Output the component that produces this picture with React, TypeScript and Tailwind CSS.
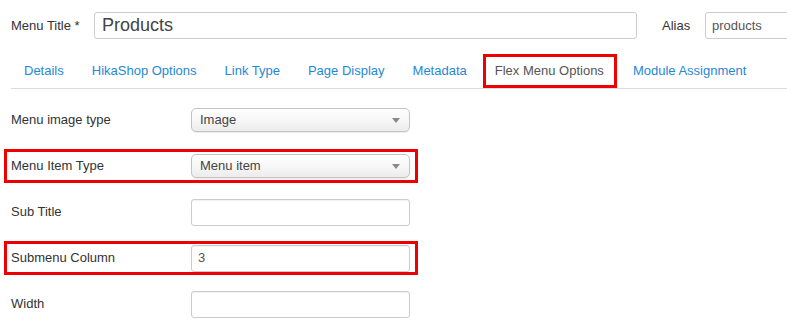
const tabs = [
  'Details',
  'HikaShop Options',
  'Link Type',
  'Page Display',
  'Metadata',
  'Flex Menu Options',
  'Module Assignment',
]

const rows = [
  { label: 'Menu image type', kind: 'select', value: 'Image', marked: false },
  { label: 'Menu Item Type', kind: 'select', value: 'Menu item', marked: true },
  { label: 'Sub Title', kind: 'input', value: '', marked: false },
  { label: 'Submenu Column', kind: 'input', value: '3', marked: true },
  { label: 'Width', kind: 'input', value: '', marked: false },
]

function Select({ value }: { value: string }) {
  return (
    <div className="flex h-[24px] w-[219px] items-center justify-between rounded-[5px] border border-[#c4c4c4] bg-linear-to-b from-white via-[#f7f7f7] to-[#ececec] pl-[8px] pr-[9px] text-[13px] text-[#444] shadow-[0_1px_1px_rgba(0,0,0,0.08)]">
      <span>{value}</span>
      <svg width="8" height="5" viewBox="0 0 8 5">
        <path d="M0 0h8L4 5z" fill="#8a8a8a" />
      </svg>
    </div>
  )
}

function Input({ value }: { value: string }) {
  return (
    <div className="flex h-[27px] w-[219px] items-center rounded-[3px] border border-[#ccc] bg-white px-[6px] text-[13px] text-[#555] shadow-[inset_0_1px_1px_rgba(0,0,0,0.06)]">
      {value}
    </div>
  )
}

export default function App() {
  return (
    <div className="h-[334px] w-[787px] overflow-hidden bg-white font-['Liberation_Sans',Arial,sans-serif] text-[13px] text-[#333]">
      {/* title row */}
      <div className="flex items-center whitespace-nowrap pt-[12px]">
        <div className="w-[94px] shrink-0 pl-[11px]">Menu Title *</div>
        <div className="flex h-[27px] w-[543px] shrink-0 items-center rounded-[3px] border border-[#ccc] px-[7px] text-[18px] text-[#444]">
          Products
        </div>
        <div className="ml-[25px] w-[43px] shrink-0">Alias</div>
        <div className="flex h-[27px] w-[220px] shrink-0 items-center rounded-[3px] border border-[#ccc] px-[6px] text-[#555]">
          products
        </div>
      </div>

      {/* tabs */}
      <div className="ml-[11px] mt-[15px] flex gap-[4px] whitespace-nowrap border-b border-[#ddd] pl-[1px]">
        {tabs.map((tab) =>
          tab === 'Flex Menu Options' ? (
            <div
              key={tab}
              className="flex h-[34px] items-center border-[3px] border-[#ee0000] pl-[9px] pr-[10px] text-[#555]"
            >
              {tab}
            </div>
          ) : (
            <div key={tab} className="flex h-[34px] items-center px-[12px] text-[#1f88d5]">
              {tab}
            </div>
          )
        )}
      </div>

      {/* fields */}
      <div className="mt-[14px] flex flex-col gap-[12px] pl-[4px]">
        {rows.map((row) => (
          <div
            key={row.label}
            className={`flex h-[34px] w-[414px] items-center border-[3px] pl-[4px] ${
              row.marked ? 'border-[#ee0000]' : 'border-transparent'
            }`}
          >
            <div className="w-[180px]">{row.label}</div>
            {row.kind === 'select' ? <Select value={row.value} /> : <Input value={row.value} />}
          </div>
        ))}
      </div>
    </div>
  )
}
